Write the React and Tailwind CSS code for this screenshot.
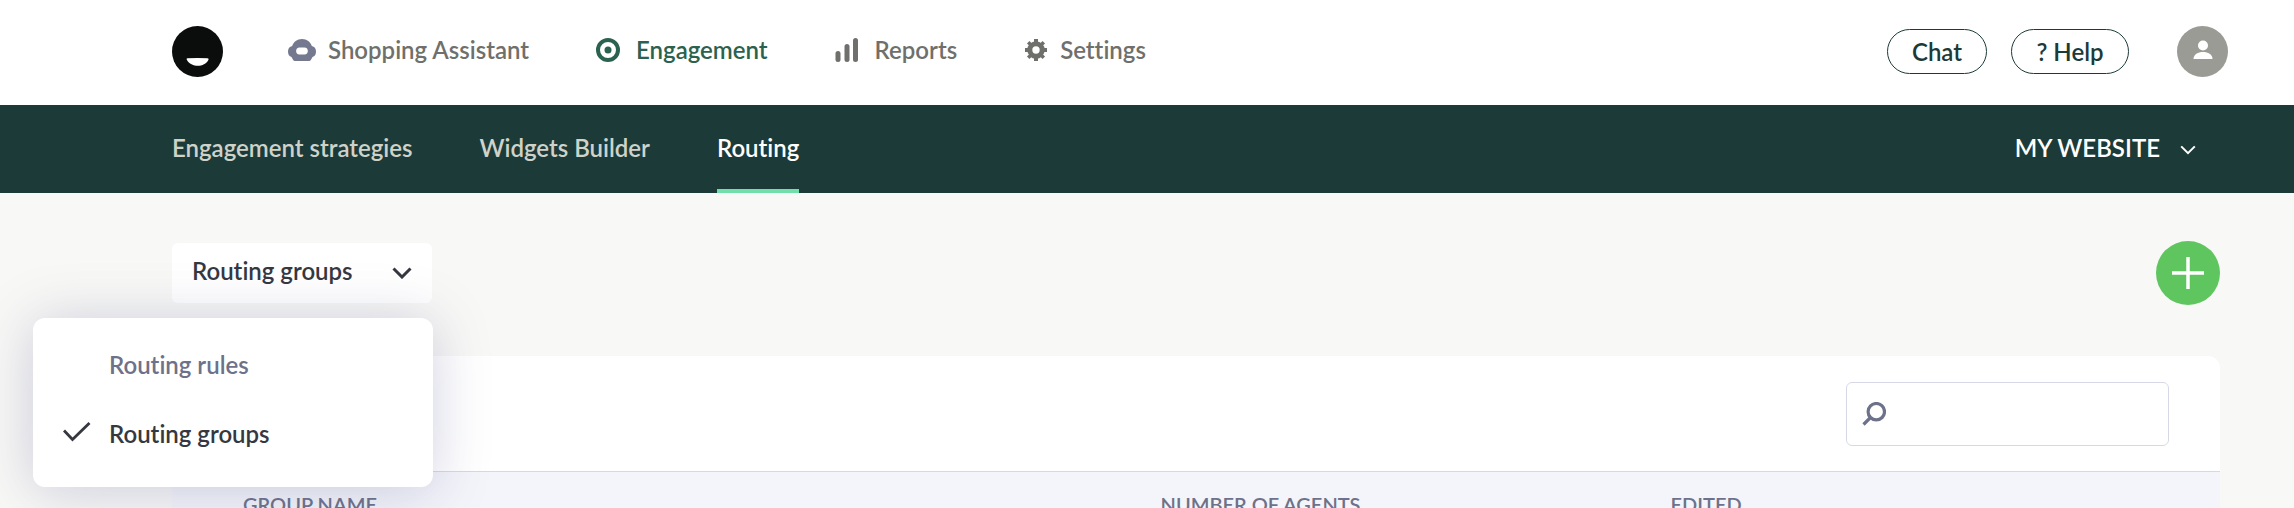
import React, { useState } from 'react';

const LogoIcon = () => (
  <svg className="h-[51px] w-[51px]" viewBox="0 0 51 51" aria-hidden="true">
    <circle cx="25.5" cy="25.5" r="25.5" fill="#0a0d0b" />
    <path d="M15.5 32.2 Q25.5 31.6 35.5 32.2 Q37 32.2 36.5 33.8 C34.5 38 30 39.8 26 39.8 C21.500 39.800 17 38 14.800 33.800 Q14 32.200 15.500 32.200 Z" fill="#fff" />
  </svg>
);

const AssistantIcon = () => (
  <svg className="h-6 w-7" viewBox="0 0 28 24" fill="currentColor" aria-hidden="true">
    <path
      fillRule="evenodd"
      d="M14 1 C19 1 22.500 4 23.800 8 C26.500 8.600 28 10.500 28 13.500 C28 16.500 26.800 18.400 24.500 19 L23 21.800 Q22.400 23 21 23 H7 Q5.600 23 5 21.800 L3.500 19 C1.200 18.400 0 16.500 0 13.500 C0 10.500 1.500 8.600 4.200 8 C5.500 4 9 1 14 1 Z M11.500 9.500 C7 9.500 7 16.500 11.500 16.500 H16.500 C21 16.500 21 9.500 16.500 9.500 Z"
    />
  </svg>
);

const TargetIcon = () => (
  <svg className="h-6 w-6" viewBox="0 0 24 24" aria-hidden="true">
    <circle cx="12" cy="12" r="10" fill="none" stroke="currentColor" strokeWidth="4" />
    <circle cx="12" cy="12" r="3.500" fill="currentColor" />
  </svg>
);

const BarsIcon = () => (
  <svg className="h-6 w-6" viewBox="0 0 24 24" fill="currentColor" aria-hidden="true">
    <rect x="0.500" y="13" width="5" height="11" rx="2.500" />
    <rect x="9.500" y="6" width="5" height="18" rx="2.500" />
    <rect x="18" y="0" width="5" height="24" rx="2.500" />
  </svg>
);

const GearIcon = () => (
  <svg className="h-6 w-6" viewBox="0 0 24 24" aria-hidden="true">
    <circle cx="12" cy="12" r="6.200" fill="none" stroke="currentColor" strokeWidth="5" />
    <path
      d="M12 1 V5 M12 19 V23 M1 12 H5 M19 12 H23"
      stroke="currentColor"
      strokeWidth="4"
    />
    <path
      d="M4.200 4.200 L7 7 M17 17 L19.800 19.800 M4.200 19.800 L7 17 M17 7 L19.800 4.200"
      stroke="currentColor"
      strokeWidth="3.500"
    />
  </svg>
);

const UserIcon = () => (
  <svg className="h-5 w-5" viewBox="0 0 20 20" fill="currentColor" aria-hidden="true">
    <circle cx="10" cy="5.500" r="5" />
    <path d="M0.500 19 C0.500 14.500 5 12 10 12 C15 12 19.500 14.500 19.500 19 Z" />
  </svg>
);

const Chevron = ({ className, strokeWidth }) => (
  <svg className={className} viewBox="0 0 20 12" fill="none" stroke="currentColor" strokeWidth={strokeWidth} aria-hidden="true">
    <path d="M1.500 1.500 L10 10 L18.500 1.500" />
  </svg>
);

const mainMenu = [
  { label: 'Shopping Assistant', Icon: AssistantIcon, gap: 'gap-3', iconColor: 'text-[#747990]' },
  { label: 'Engagement', Icon: TargetIcon, gap: 'gap-4', active: true },
  { label: 'Reports', Icon: BarsIcon, gap: 'gap-4' },
  { label: 'Settings', Icon: GearIcon, gap: 'gap-3' },
];

const subMenu = ['Engagement strategies', 'Widgets Builder', 'Routing'];

const routingViews = ['Routing rules', 'Routing groups'];

const App = () => {
  const [view, setView] = useState('Routing groups');
  const [open, setOpen] = useState(true);
  const [search, setSearch] = useState('');

  return (
    <div className="h-screen overflow-hidden bg-[#f8f8f6] font-['Lato','Open_Sans',sans-serif] text-2xl font-semibold text-[#363840] [font-variant-ligatures:none]">
      {/* Top bar */}
      <header className="flex h-[105px] items-center bg-white pr-[66px] pb-[2px] pl-[172px]">
        <a href="#home" aria-label="Home">
          <LogoIcon />
        </a>
        <nav className="ml-[65px] flex items-center gap-[67px]">
          {mainMenu.map(({ label, Icon, gap, iconColor, active }) => (
            <a
              key={label}
              href="#menu"
              className={`flex items-center pb-1 ${gap} ${active ? 'text-[#2b624f]' : 'text-[#6f706b]'}`}
            >
              <span className={iconColor}>
                <Icon />
              </span>
              {label}
            </a>
          ))}
        </nav>
        <div className="ml-auto flex items-center">
          <button className="h-[45px] w-[100px] rounded-full border border-[#1c3b38] text-[#1c3b38]">Chat</button>
          <button className="ml-6 h-[45px] w-[118px] rounded-full border border-[#1c3b38] text-[#1c3b38]">? Help</button>
          <button
            aria-label="Account"
            className="ml-12 flex h-[51px] w-[51px] items-center justify-center rounded-full bg-[#9b9b96] pb-1 text-white"
          >
            <UserIcon />
          </button>
        </div>
      </header>

      {/* Sub navigation */}
      <div className="flex h-[88px] items-stretch bg-[#1c3b38] pr-[98px] pl-[172px]">
        <nav className="flex gap-[67px]">
          {subMenu.map((item) => (
            <a
              key={item}
              href="#submenu"
              className={`flex items-center border-b-4 pt-[2px] ${
                item === 'Routing' ? 'border-[#72dfab] text-white' : 'border-transparent text-[#d0d2c9]'
              }`}
            >
              {item}
            </a>
          ))}
        </nav>
        <div className="ml-auto flex items-center gap-5 pb-[2px] text-white">
          <select aria-label="Website" className="[field-sizing:content] appearance-none bg-transparent">
            <option>MY WEBSITE</option>
          </select>
          <Chevron className="mt-1 h-[10px] w-4" strokeWidth="2.500" />
        </div>
      </div>

      <main className="pt-12 pr-[74px] pl-[172px]">
        <div className="flex items-center justify-between">
          <div className="relative">
            <button
              aria-haspopup="listbox"
              aria-expanded={open}
              onClick={() => setOpen(!open)}
              className="flex h-[60px] w-[260px] items-center justify-between rounded-md bg-white px-5 pb-1"
            >
              {view}
              <Chevron className="mt-1 h-3 w-5" strokeWidth="3" />
            </button>
            {open && (
              <ul
                role="listbox"
                aria-label="Routing view"
                className="absolute top-[75px] -right-px z-10 w-[400px] rounded-xl bg-white pt-[29px] pb-[35px] shadow-[0_4px_56px_rgba(80,84,140,0.27)]"
              >
                {routingViews.map((item) => (
                  <li key={item} role="option" aria-selected={item === view} className="not-last:mb-[33px]">
                    <button
                      onClick={() => setView(item)}
                      className={`flex h-9 w-full items-center pl-[30px] text-left ${
                        item === view ? '' : 'text-[#6d728a]'
                      }`}
                    >
                      <span className="w-[46px] pb-1">
                        {item === view && (
                          <svg className="h-5 w-7" viewBox="0 0 28 20" fill="none" stroke="currentColor" strokeWidth="2.800" aria-hidden="true">
                            <path d="M1 8.500 L9.500 17.500 L26.500 1" />
                          </svg>
                        )}
                      </span>
                      {item}
                    </button>
                  </li>
                ))}
              </ul>
            )}
          </div>
          <button
            aria-label="Add routing group"
            className="flex h-16 w-16 items-center justify-center rounded-full bg-[#5fc65f] text-white"
          >
            <svg className="h-8 w-8" viewBox="0 0 32 32" stroke="currentColor" strokeWidth="3.500" aria-hidden="true">
              <path d="M16 0 V32 M0 16 H32" />
            </svg>
          </button>
        </div>

        {/* Groups table */}
        <section className="mt-[51px] overflow-hidden rounded-xl bg-white">
          <div className="flex h-[115px] items-center justify-end pr-[51px]">
            <div className="flex h-16 w-[323px] items-center gap-3 rounded-md border border-[#d7d8e6] px-[15px]">
              <svg className="h-6 w-6 shrink-0 text-[#6d728a]" viewBox="0 0 24 24" fill="none" stroke="currentColor" strokeWidth="3.200" aria-hidden="true">
                <circle cx="14.300" cy="9.700" r="8.200" />
                <path d="M8.500 15.500 L1.500 22.500" />
              </svg>
              <input
                type="search"
                aria-label="Search groups"
                value={search}
                onChange={(e) => setSearch(e.target.value)}
                className="w-full min-w-0 outline-none"
              />
            </div>
          </div>
          <table className="w-full table-fixed border-t border-[#d7d8e6] text-left">
            <thead>
              <tr className="h-16 bg-[#f4f5fa] text-xl text-[#6d728a]">
                <th className="w-[45%] pl-[71px] font-semibold">GROUP NAME</th>
                <th className="w-[25%] pl-[67px] font-semibold">NUMBER OF AGENTS</th>
                <th className="pl-[65px] font-semibold">EDITED</th>
              </tr>
            </thead>
          </table>
        </section>
      </main>
    </div>
  );
};

export default App;
